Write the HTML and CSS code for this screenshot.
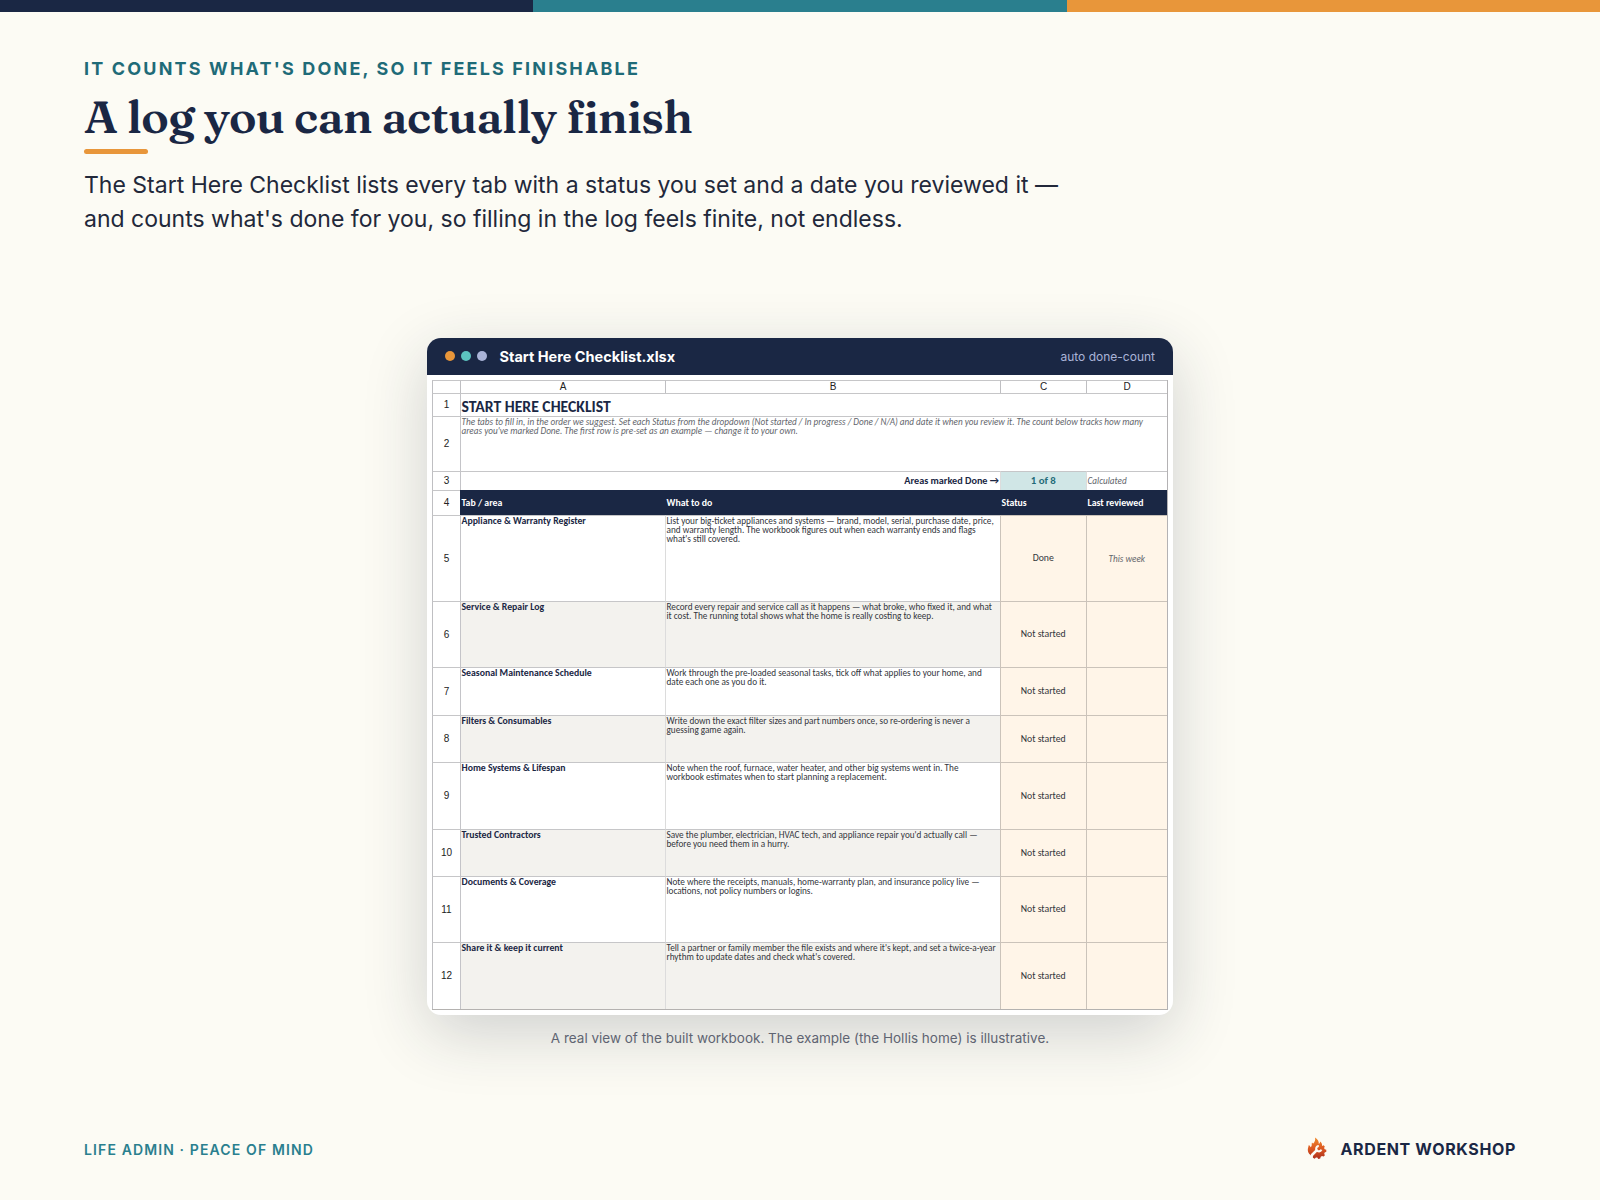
FILE: index.html
```html
<!DOCTYPE html>
<html lang="en">
<head>
    <meta charset="UTF-8">
    <meta name="viewport" content="width=device-width, initial-scale=1.0">
    <title>A log you can actually finish</title>
    <link rel="stylesheet" href="styles.css">
</head>
<body>

<!-- Top Stripe -->
<div class="stripe">
    <span class="navy"></span>
    <span class="teal"></span>
    <span class="orange"></span>
</div>

<!-- Heading -->
<header class="intro">
    <p class="eyebrow">IT COUNTS WHAT'S DONE, SO IT FEELS FINISHABLE</p>
    <h1>A log you can actually finish</h1>
    <div class="rule"></div>
    <p class="lead">The Start Here Checklist lists every tab with a status you set and a date you reviewed it —<br>and counts what's done for you, so filling in the log feels finite, not endless.</p>
</header>

<!-- Workbook Window -->
<main class="stage">
    <div class="window">
        <div class="window-bar">
            <span class="dot orange"></span>
            <span class="dot mint"></span>
            <span class="dot lilac"></span>
            <span class="window-title">Start Here Checklist.xlsx</span>
            <span class="window-note">auto done-count</span>
        </div>
        <div class="sheet-wrap">
            <table class="sheet">
                <colgroup>
                    <col class="col-num">
                    <col class="col-a">
                    <col class="col-b">
                    <col class="col-c">
                    <col class="col-d">
                </colgroup>
                <tr class="letters h13"><th></th><th>A</th><th>B</th><th>C</th><th>D</th></tr>
                <tr class="h23"><th>1</th><td colspan="4" class="sheet-title">START HERE CHECKLIST</td></tr>
                <tr class="h55"><th>2</th><td colspan="4" class="sheet-help">The tabs to fill in, in the order we suggest. Set each Status from the dropdown (Not started / In progress / Done / N/A) and date it when you review it. The count below tracks how many<br>areas you've marked Done. The first row is pre-set as an example — change it to your own.</td></tr>
                <tr class="h19"><th>3</th><td colspan="2" class="count-label">Areas marked Done →</td><td class="count">1 of 8</td><td class="calc">Calculated</td></tr>
                <tr class="head h25"><th>4</th><td>Tab / area</td><td>What to do</td><td>Status</td><td>Last reviewed</td></tr>
                <tr class="item h86"><th>5</th><td class="area">Appliance &amp; Warranty Register</td><td class="todo">List your big-ticket appliances and systems — brand, model, serial, purchase date, price,<br>and warranty length. The workbook figures out when each warranty ends and flags<br>what's still covered.</td><td class="status">Done</td><td class="date">This week</td></tr>
                <tr class="item alt h66"><th>6</th><td class="area">Service &amp; Repair Log</td><td class="todo">Record every repair and service call as it happens — what broke, who fixed it, and what<br>it cost. The running total shows what the home is really costing to keep.</td><td class="status">Not started</td><td class="date"></td></tr>
                <tr class="item h48"><th>7</th><td class="area">Seasonal Maintenance Schedule</td><td class="todo">Work through the pre-loaded seasonal tasks, tick off what applies to your home, and<br>date each one as you do it.</td><td class="status">Not started</td><td class="date"></td></tr>
                <tr class="item alt h47"><th>8</th><td class="area">Filters &amp; Consumables</td><td class="todo">Write down the exact filter sizes and part numbers once, so re-ordering is never a<br>guessing game again.</td><td class="status">Not started</td><td class="date"></td></tr>
                <tr class="item h67"><th>9</th><td class="area">Home Systems &amp; Lifespan</td><td class="todo">Note when the roof, furnace, water heater, and other big systems went in. The<br>workbook estimates when to start planning a replacement.</td><td class="status">Not started</td><td class="date"></td></tr>
                <tr class="item alt h47"><th>10</th><td class="area">Trusted Contractors</td><td class="todo">Save the plumber, electrician, HVAC tech, and appliance repair you'd actually call —<br>before you need them in a hurry.</td><td class="status">Not started</td><td class="date"></td></tr>
                <tr class="item h66"><th>11</th><td class="area">Documents &amp; Coverage</td><td class="todo">Note where the receipts, manuals, home-warranty plan, and insurance policy live —<br>locations, not policy numbers or logins.</td><td class="status">Not started</td><td class="date"></td></tr>
                <tr class="item alt h67"><th>12</th><td class="area">Share it &amp; keep it current</td><td class="todo">Tell a partner or family member the file exists and where it's kept, and set a twice-a-year<br>rhythm to update dates and check what's covered.</td><td class="status">Not started</td><td class="date"></td></tr>
            </table>
        </div>
    </div>
    <p class="caption">A real view of the built workbook. The example (the Hollis home) is illustrative.</p>
</main>

<!-- Footer -->
<footer>
    <span class="tagline">LIFE ADMIN · PEACE OF MIND</span>
    <span class="brand">
        <svg class="logo" width="20" height="24" viewBox="0 0 20 24">
            <defs>
                <linearGradient id="flame" x1="0" y1="0" x2="0" y2="1">
                    <stop offset="0" stop-color="#f08a2c"/>
                    <stop offset="0.5" stop-color="#dd5a22"/>
                    <stop offset="1" stop-color="#ad2f1c"/>
                </linearGradient>
            </defs>
            <path fill="url(#flame)" d="M8 .5C11 2.2 12 4.600 11.800 7c.8-.4 1.300-1.200 1.400-2.400 1.500 1.200 2 2.800 1.900 4.400l1.500-.8 1.200 1.300-.7 1.500.6 1.300 1.600.5v1.900l-1.600.7-.5 1.300.7 1.500-1.300 1.400-1.600-.6-1.300.7-.5 1.700-1.900.5-1-1.400-1.400.1-1.200 1.100-1.800-.9.1-1.600C2.600 18.100.8 16.100.8 13c0-2 .7-3.200 1-5 1 .5 1.500 1.300 1.700 2.300C5.500 8.700 4.300 7.300 5 5.500c.4.5.8.9 1.300 1C7.800 4.800 8.600 2.800 8 .5z"/>
            <!-- wrench -->
            <path fill="none" stroke="#fcfbf4" stroke-width="2.6" stroke-linecap="round" d="M5 18L9.600 13.400"/>
            <path fill="none" stroke="#fcfbf4" stroke-width="2.100" d="M11.800 9a2.700 2.700 0 1 0 2.600 3.700"/>
        </svg>
        ARDENT WORKSHOP
    </span>
</footer>

</body>
</html>
```
FILE: styles.css
```css
/* Basic Reset */
* {
    box-sizing: border-box;
    margin: 0;
    padding: 0;
}

body {
    display: flex;
    flex-direction: column;
    height: 1200px;
    background-color: #fcfbf4;
    color: #1a2744;
    font-family: Inter, "Liberation Sans", sans-serif;
}

/* Top Stripe */
.stripe {
    display: flex;
    height: 12px;
}

.stripe span {
    flex: 1;
}

.navy {
    background-color: #1a2744;
}

.teal {
    background-color: #2a7f8e;
}

.orange {
    background-color: #e8963a;
}

/* Heading */
.intro {
    padding: 46px 84px 0;
}

.eyebrow {
    color: #1f6b78;
    font-size: 18px;
    font-weight: 700;
    line-height: 22px;
    letter-spacing: 0.12em;
}

h1 {
    margin-top: 12px;
    font-family: Fraunces, "Liberation Serif", serif;
    font-size: 46px;
    font-weight: 600;
    line-height: 50px;
    letter-spacing: -0.56px;
}

.rule {
    width: 64px;
    height: 5px;
    margin-top: 7px;
    border-radius: 3px;
    background-color: #e8963a;
}

.lead {
    margin-top: 14px;
    color: #22283a;
    font-size: 23px;
    line-height: 34px;
}

/* Workbook Window */
.stage {
    display: flex;
    flex-direction: column;
    align-items: center;
    margin-top: 102px;
}

.window {
    width: 746px;
    border-radius: 14px;
    overflow: hidden;
    background-color: #fff;
    box-shadow: 0 18px 64px rgba(32, 38, 62, 0.2);
}

.window-bar {
    display: flex;
    align-items: center;
    gap: 6px;
    height: 37px;
    padding: 0 18px;
    background-color: #1a2744;
}

.dot {
    width: 10px;
    height: 10px;
    margin-bottom: 1px;
    border-radius: 50%;
}

.mint {
    background-color: #5cc4c0;
}

.lilac {
    background-color: #aab4d8;
}

.window-title {
    margin-left: 6.5px;
    color: #fff;
    font-size: 14.5px;
    font-weight: 700;
}

.window-note {
    margin-left: auto;
    color: #aab4d8;
    font-size: 12px;
}

.sheet-wrap {
    padding: 5px;
}

/* Spreadsheet */
.sheet {
    width: 736px;
    table-layout: fixed;
    border-collapse: separate;
    border-spacing: 0;
    border-right: 1px solid #b4b2b4;
    border-bottom: 1px solid #b4b2b0;
    font-family: Carlito, Lato, sans-serif;
    line-height: 9.15px;
}

.col-num { width: 28px; }
.col-a { width: 205px; }
.col-b { width: 335px; }
.col-c { width: 86px; }
.col-d { width: 81px; }

.h13 { height: 13px; }
.h19 { height: 19px; }
.h23 { height: 23px; }
.h25 { height: 25px; }
.h47 { height: 47px; }
.h48 { height: 48px; }
.h55 { height: 55px; }
.h66 { height: 66px; }
.h67 { height: 67px; }
.h86 { height: 86px; }

.sheet th,
.sheet td {
    border-top: 1px solid #c6c6c8;
    border-left: 1px solid #dcdcdc;
    white-space: nowrap;
    vertical-align: middle;
}

.sheet th {
    border-left-color: #bfbfc2;
    color: #222;
    font-family: "Liberation Sans", Arial, sans-serif;
    font-size: 10px;
    font-weight: 400;
    text-align: center;
}

.sheet th + td {
    border-left-color: #c4c4c8;
}

.sheet td {
    padding: 0 1px 0 0.5px;
}

.sheet .sheet-title {
    padding-bottom: 1px;
    font-size: 15.7px;
    font-weight: 700;
    line-height: 16px;
    vertical-align: bottom;
}

.sheet .sheet-help {
    color: #63666c;
    font-size: 9.2px;
    font-style: italic;
    vertical-align: top;
}

.count-label {
    font-size: 10.2px;
    font-weight: 700;
    text-align: right;
}

.count {
    background-color: #d0e6e6;
    color: #1f6b78;
    font-size: 10.8px;
    font-weight: 700;
    text-align: center;
}

.calc {
    color: #63666c;
    font-size: 9.2px;
    font-style: italic;
}

.sheet .head td {
    padding-top: 1px;
    border-color: #1a2744;
    background-color: #1a2744;
    color: #fff;
    font-size: 9.8px;
    font-weight: 700;
}

.sheet .item .area {
    padding-top: 1px;
    font-size: 9.75px;
    font-weight: 700;
    vertical-align: top;
}

.sheet .item .todo {
    color: #33363c;
    font-size: 9.21px;
    vertical-align: top;
}

.alt .area,
.alt .todo {
    background-color: #f3f2ee;
}

.sheet .status,
.sheet .date {
    border-color: #cbc3ba;
    background-color: #fff5e8;
    text-align: center;
}

.sheet .status {
    padding-top: 1px;
    color: #33363c;
    font-size: 9.75px;
}

.date {
    color: #63666c;
    font-size: 9.2px;
    font-style: italic;
}

.caption {
    position: relative;
    margin-top: 13px;
    color: #5f6472;
    font-size: 13.5px;
    line-height: 20px;
}

/* Footer */
footer {
    display: flex;
    justify-content: space-between;
    align-items: center;
    margin-top: auto;
    padding: 0 84px 39px;
}

.tagline {
    padding-top: 1px;
    color: #2a7f8e;
    font-size: 14px;
    font-weight: 600;
    line-height: 20px;
    letter-spacing: 0.08em;
}

.brand {
    display: flex;
    align-items: center;
    gap: 13px;
    font-size: 16px;
    font-weight: 700;
    line-height: 20px;
    letter-spacing: 0.04em;
}
```
